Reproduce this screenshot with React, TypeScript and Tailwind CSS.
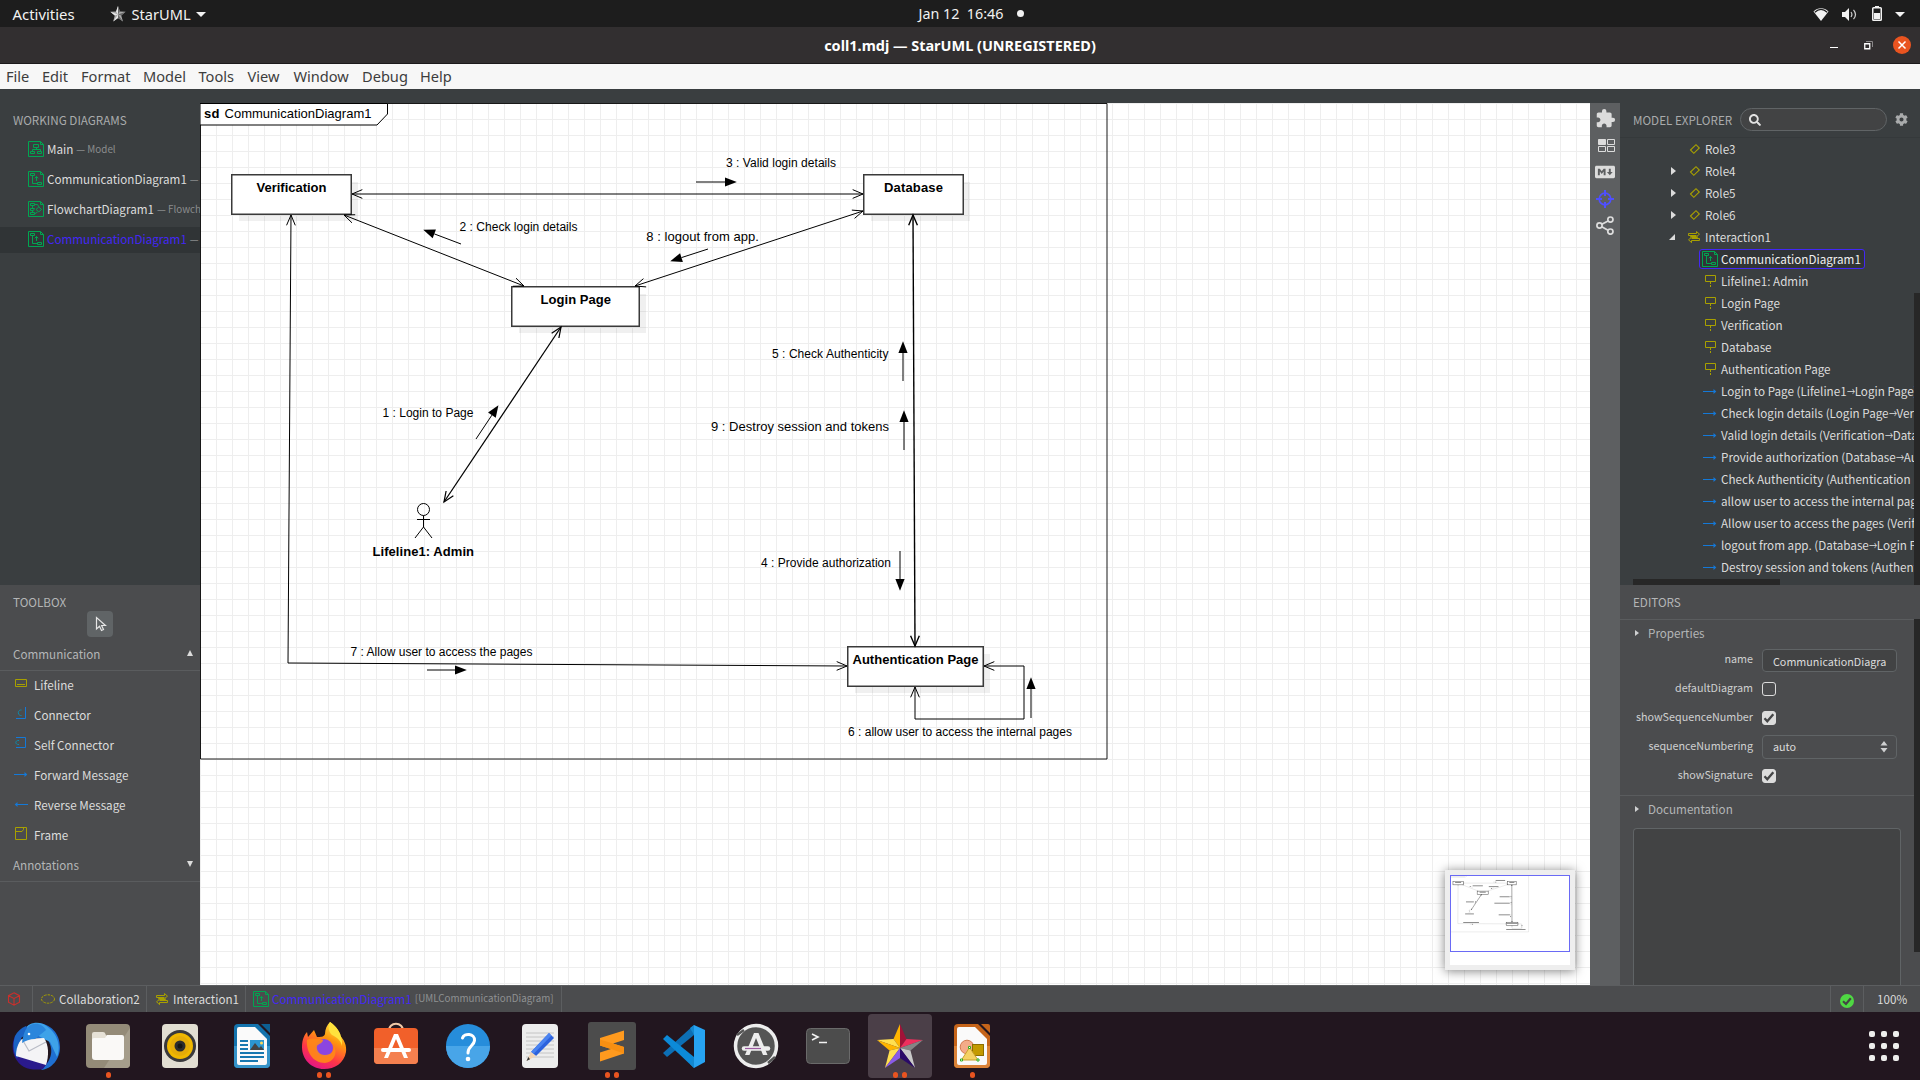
import React from "react";
import { FaSearch, FaCog, FaMarkdown } from "react-icons/fa";
import { MdExtension } from "react-icons/md";

const UI = "font-['Noto_Sans_CJK_SC','Noto_Sans',sans-serif]";
const GREEN = "#00a651";
const OLIVE = "#a8a000";
const BLUE = "#1479d8";

/* ---------- small icons ---------- */

function DiagramIcon({ kind }: { kind: "class" | "comm" | "flow" }) {
  return (
    <svg width="16" height="16" viewBox="0 0 16 16" fill="none" stroke={GREEN} strokeWidth="1" className="shrink-0">
      <path d="M.5.5H12.5L15.5 3.5V15.5H.5ZM12.5.5V3.5H15.5" />
      {kind === "class" && <path d="M5.500 3.500H10.500V6.500H5.500ZM8.500 6.500V8.500M4.500 10.500V8.500H12.500V10.500M2.500 10.500H6.500V12.500H2.500ZM9.500 10.500H13.500V12.500H9.500Z" />}
      {kind === "comm" && <path d="M2.500 2.500H6.500V4.500H2.500ZM4.500 4.500V12.500H9.500M9.500 11.500H13.500V13.500H9.500ZM8.500 10V5.500M6.800 7.300L8.500 5.500L10.200 7.300" />}
      {kind === "flow" && <path d="M2.500 2.500H6.500V4.500H2.500ZM6.500 3.500H9.500L11 6M2.500 7.500H6.500L5.500 9.500H2.500ZM8 8.500L10.800 6L13.500 8.500L10.800 10.800ZM2.500 11.500H6.500V13.500H2.500ZM6.500 13L9.500 11M4.500 5V7.500M4.500 9.700V12" />}
    </svg>
  );
}

function DiamondIcon() {
  return (
    <svg width="12" height="12" viewBox="0 0 12 12" fill="none" stroke={OLIVE} strokeWidth="1.1">
      <path d="M1.5 7L7 1.7L10.3 5L4.8 10.3Z" />
    </svg>
  );
}

function InteractionIcon() {
  return (
    <svg width="12" height="12" viewBox="0 0 12 12" fill="none" stroke={OLIVE} strokeWidth="1">
      <path d="M.5 2.500H8.500V.5L11.500 3.200L8.500 5.500H2.500V6.500M11.500 9.500H3.500V11.700L.5 8.700L3.500 6.500H9.500V5.500M.5 2.500V4.500H8.500M11.500 9.500V7.500H3.500" />
    </svg>
  );
}

function LifelineIcon() {
  return (
    <svg width="12" height="14" viewBox="0 0 12 14" fill="none" stroke={OLIVE}>
      <path d="M.5 1.500H10.500V7.500H.5Z" />
      <path d="M5.500 8V14" strokeDasharray="2 1" />
    </svg>
  );
}

function MessageIcon({ flip = false }: { flip?: boolean }) {
  return (
    <svg width="14" height="7" viewBox="0 0 14 7" className={flip ? "-scale-x-100" : ""}>
      <path d="M0 3.500H12" stroke={BLUE} />
      <path d="M10.500 1L13.300 3.500L10.500 6Z" fill={BLUE} />
    </svg>
  );
}

function CrosshairIcon() {
  return (
    <svg width="18" height="18" viewBox="0 0 18 18" fill="none" stroke="#4f4fff" strokeWidth="2">
      <circle cx="9" cy="9" r="5.8" strokeWidth="1.7" />
      <path d="M9 0V6M9 12V18M0 9H6M12 9H18" />
    </svg>
  );
}

function ShareIcon() {
  return (
    <svg width="18" height="19" viewBox="0 0 18 19" fill="none" stroke="#dcdcdc" strokeWidth="1.7">
      <circle cx="14.4" cy="3.6" r="2.6" />
      <circle cx="3.5" cy="9.5" r="2.6" />
      <circle cx="14.4" cy="15.6" r="2.6" />
      <path d="M5.8 8.3L12 4.9M5.8 10.7L12 14.2" />
    </svg>
  );
}

function LayoutIcon() {
  return (
    <svg width="17" height="13" viewBox="0 0 17 13" fill="none" stroke="#dcdcdc">
      <path d="M.5.5H7.5V5.5H.5Z" fill="#dcdcdc" />
      <path d="M9.5.5H16.5V5.5H9.5ZM.5 7.500H7.500V12.500H.5ZM9.500 7.500H16.500V12.500H9.500Z" />
    </svg>
  );
}

/* ---------- top bars ---------- */

function SystemBar() {
  return (
    <header className="grid h-[27px] shrink-0 grid-cols-3 items-center bg-[#1d1d1d] text-[14.6px] leading-[27px] text-[#f2f2f2]">
      <div className="flex items-center pl-[12.5px]">
        <span className="w-[97px] text-[14.9px]">Activities</span>
        <svg width="16" height="16" viewBox="0 0 16 16">
          <path d="M8 0L9.9 5.6L15.6 5.8L11.2 9.5L13 15.5L8 12L3.2 15.5L4.8 9.5L.3 5.8L6.1 5.6Z" fill="#aaa" />
          <path d="M8 0V8.4L6.1 5.6ZM8 8.4L.3 5.8L4.8 9.5ZM8 8.4L3.2 15.5L8 12Z" fill="#e8e8e8" />
          <path d="M8 0L9.9 5.6L8 8.4ZM8 8.4L13 15.5L8 12ZM8 8.4L15.6 5.8L11.2 9.5Z" fill="#686868" />
        </svg>
        <span className="ml-[6px] w-[64px]">StarUML</span>
        <svg width="10" height="5" viewBox="0 0 10 5"><path d="M0 0H10L5 5Z" fill="#f2f2f2" /></svg>
      </div>
      <div className="flex items-center justify-center gap-[14px] pb-px pl-[23px]">
        <span className="whitespace-pre text-[14.3px]">Jan 12  16:46</span>
        <span className="h-[7px] w-[7px] rounded-full bg-[#f2f2f2]" />
      </div>
      <div className="flex items-center justify-end pr-[15px]">
        <svg width="16" height="13" viewBox="0 0 16 13">
          <path d="M8 13L.5 3.4C4.8-.7 11.2-.7 15.500 3.400Z" fill="#f2f2f2" />
          <path d="M1.8 4.2C5.6.8 10.400.8 14.200 4.200" fill="none" stroke="#1d1d1d" strokeWidth="1.2" />
        </svg>
        <svg width="15" height="13" viewBox="0 0 15 13" className="ml-[13px]">
          <path d="M0 4H3L7 0V13L3 9H0Z" fill="#f2f2f2" />
          <path d="M9 4Q10.800 6.500 9 9M11.500 1.800Q15.500 6.500 11.500 11.200" fill="none" stroke="#cfcfcf" strokeWidth="1.200" />
        </svg>
        <svg width="10" height="15" viewBox="0 0 10 15" className="mb-px ml-[15px]">
          <path d="M3 0H7V1H3Z" fill="#f2f2f2" />
          <rect x=".75" y="1.750" width="8.500" height="12.500" rx=".8" fill="none" stroke="#f2f2f2" strokeWidth="1.500" />
          <path d="M2 7H8V13H2Z" fill="#f2f2f2" />
        </svg>
        <svg width="10" height="5" viewBox="0 0 10 5" className="ml-[13px]"><path d="M0 0H10L5 5Z" fill="#f2f2f2" /></svg>
      </div>
    </header>
  );
}

function TitleBar() {
  return (
    <div className="grid h-[37px] shrink-0 grid-cols-3 items-center border-b border-[#1c1a1b] bg-[#322f30] text-white">
      <div />
      <div className="pt-[2px] text-center text-[14.48px] leading-[34px] font-bold whitespace-nowrap">coll1.mdj — StarUML (UNREGISTERED)</div>
      <div className="flex items-center justify-end pr-[9px]">
        <span className="mt-[5px] h-px w-2 bg-white" />
        <svg width="9" height="9" viewBox="0 0 9 9" className="ml-[26px]" fill="none">
          <path d="M2 .5H8.500V6" stroke="#8a8889" />
          <path d="M.75 2.750H5.750V7.750H.75Z" stroke="#fff" strokeWidth="1.300" />
        </svg>
        <svg width="18" height="18" viewBox="0 0 18 18" className="ml-[20px]">
          <circle cx="9" cy="9" r="9" fill="#e95420" />
          <path d="M5.500 5.500L12.500 12.500M12.500 5.500L5.500 12.500" stroke="#fff" strokeWidth="1.500" />
        </svg>
      </div>
    </div>
  );
}

function MenuBar() {
  return (
    <nav className="flex h-[25px] shrink-0 bg-[#f7f7f7] pl-[6px] text-[14.6px] leading-[25px] text-[#3d3d3d]">
      <span className="w-[36px]">File</span>
      <span className="w-[39px]">Edit</span>
      <span className="w-[62px]">Format</span>
      <span className="w-[55.500px]">Model</span>
      <span className="w-[49px]">Tools</span>
      <span className="w-[46px]">View</span>
      <span className="w-[68.500px]">Window</span>
      <span className="w-[58px]">Debug</span>
      <span>Help</span>
    </nav>
  );
}

/* ---------- left column ---------- */

const working: { name: string; note: string; kind: "class" | "comm" | "flow"; active?: boolean }[] = [
  { name: "Main", note: "— Model", kind: "class" },
  { name: "CommunicationDiagram1", note: "—", kind: "comm" },
  { name: "FlowchartDiagram1", note: "— Flowchart1", kind: "flow" },
  { name: "CommunicationDiagram1", note: "—", kind: "comm", active: true },
];

function WorkingDiagrams() {
  return (
    <section className="h-[482px] overflow-hidden bg-[#3a3e40]">
      <h2 className="mt-[5px] h-[24px] pl-[13px] text-[11.7px] leading-[24px] text-[#a9abac]">WORKING DIAGRAMS</h2>
      <ul className="mt-[5px] flex flex-col gap-1">
        {working.map((d, i) => (
          <li key={i} className={`flex h-[26px] items-center overflow-hidden pb-[2px] pl-[28px] text-[11.67px] leading-[24px] whitespace-nowrap ${d.active ? "bg-[#303436]" : ""}`}>
            <DiagramIcon kind={d.kind} />
            <span className={`ml-[3px] ${d.active ? "text-[#4327f5]" : "text-[#dcdcdc]"}`}>{d.name}</span>
            <span className="ml-[3px] shrink-0 text-[9.85px] text-[#8b8d8e]">{d.note}</span>
          </li>
        ))}
      </ul>
    </section>
  );
}

const tools: { name: string; icon: React.ReactNode }[] = [
  { name: "Lifeline", icon: <svg width="14" height="14" viewBox="0 0 14 14" fill="none" stroke={OLIVE}><path d="M1.500 2.500H12.500V9.500H1.500ZM3 7.500H11" /></svg> },
  { name: "Connector", icon: <svg width="14" height="14" viewBox="0 0 14 14" fill="none" stroke={BLUE}><path d="M11.500 0V11.500H2" /><path d="M7.500 3C3.200 2.500 3.200 9 7.500 8.500" stroke="#0f8aa8" /></svg> },
  { name: "Self Connector", icon: <svg width="14" height="14" viewBox="0 0 14 14" fill="none" stroke={BLUE}><path d="M2 .5H11.500V10.500H2" /><path d="M5 3.500C.8 3 .8 8 5 7.500" stroke="#0f8aa8" /></svg> },
  { name: "Forward Message", icon: <MessageIcon /> },
  { name: "Reverse Message", icon: <MessageIcon flip /> },
  { name: "Frame", icon: <svg width="14" height="14" viewBox="0 0 14 14" fill="none" stroke={OLIVE}><path d="M1.500.5H12.500V12.500H1.500ZM1.500 4.500H8L9.500 2.500V.5" /></svg> },
];

function Toolbox() {
  return (
    <section className="h-[400px] bg-[#4b4c4e] text-[11.67px] leading-[24px]">
      <h2 className="pt-[5px] pl-[13px] text-[#b4b6b7]">TOOLBOX</h2>
      <div className="mx-auto -mt-[3px] flex h-[26px] w-[26px] items-center justify-center rounded-[4px] bg-[#606466] pl-[2px]">
        <svg width="12" height="16" viewBox="0 0 12 16" fill="none" stroke="#e6e6e6" strokeWidth="1.200">
          <path d="M1.500 1.500V13L4.500 10.300L6.500 14.500L8.500 13.500L6.600 9.500H10.500Z" />
        </svg>
      </div>
      <div className="mt-[3px] flex h-[31px] items-start justify-between border-b border-[#5a5c5e] pt-[2px] pr-[7px] pl-[13px] text-[#b4b6b7]">
        <span>Communication</span>
        <svg width="6" height="6" viewBox="0 0 6 6" className="mt-[8px]"><path d="M3 0L6 6H0Z" fill="#dcdcdc" /></svg>
      </div>
      <ul className="h-[180px] text-[#dcdcdc]">
        {tools.map((t) => (
          <li key={t.name} className="flex h-[30px] items-center pb-[3px] pl-[14px]">
            <span className="flex w-[14px] items-center pb-[1px]">{t.icon}</span>
            <span className="ml-[6px]">{t.name}</span>
          </li>
        ))}
      </ul>
      <div className="flex h-[31px] items-start justify-between border-b border-[#5a5c5e] pt-[2px] pr-[7px] pl-[13px] text-[#b4b6b7]">
        <span>Annotations</span>
        <svg width="6" height="6" viewBox="0 0 6 6" className="mt-[8px]"><path d="M3 6L6 0H0Z" fill="#dcdcdc" /></svg>
      </div>
    </section>
  );
}

/* ---------- diagram ---------- */

type Pt = [number, number];

function Open({ at, from }: { at: Pt; from: Pt }) {
  const a = Math.atan2(at[1] - from[1], at[0] - from[0]);
  const p = (s: number) => {
    const L = 11.2, d = 0.4;
    return `${at[0] - L * Math.cos(a + s * d)} ${at[1] - L * Math.sin(a + s * d)}`;
  };
  return <path d={`M${p(1)}L${at[0]} ${at[1]}L${p(-1)}`} fill="none" />;
}

function Link({ pts, w = 1 }: { pts: Pt[]; w?: number }) {
  const n = pts.length;
  return (
    <g stroke="#000" strokeWidth={w} fill="none">
      <polyline points={pts.map((p) => p.join(",")).join(" ")} />
      <Open at={pts[0]} from={pts[1]} />
      <Open at={pts[n - 1]} from={pts[n - 2]} />
    </g>
  );
}

function Solid({ from, to }: { from: Pt; to: Pt }) {
  const a = Math.atan2(to[1] - from[1], to[0] - from[0]);
  const c = Math.cos(a), s = Math.sin(a);
  const tx = to[0] + 0.8 * c, ty = to[1] + 0.8 * s;
  const bx = to[0] - 11 * c, by = to[1] - 11 * s;
  return (
    <g>
      <path d={`M${from[0]} ${from[1]}L${bx} ${by}`} stroke="#000" />
      <path d={`M${tx} ${ty}L${bx - 4.600 * s} ${by + 4.600 * c}L${bx + 4.600 * s} ${by - 4.600 * c}Z`} />
    </g>
  );
}

const boxes: [number, number, number, number][] = [
  [231, 174, 121, 41],
  [511, 286, 129, 41],
  [863, 174, 101, 41],
  [847, 646, 137, 41],
];

const labels: { t: string; x: number; y: number; w: number; s: number; b?: boolean }[] = [
  { t: "sd", x: 204, y: 118, w: 15.5, s: 13, b: true },
  { t: "CommunicationDiagram1", x: 224.5, y: 118, w: 147, s: 13 },
  { t: "Verification", x: 256.5, y: 192, w: 70, s: 13, b: true },
  { t: "Database", x: 884, y: 192, w: 59, s: 13, b: true },
  { t: "Login Page", x: 540.5, y: 304, w: 70.5, s: 13, b: true },
  { t: "Authentication Page", x: 852.5, y: 664, w: 126, s: 13, b: true },
  { t: "Lifeline1: Admin", x: 372.5, y: 556, w: 101.5, s: 13, b: true },
  { t: "1 : Login to Page", x: 382.5, y: 417, w: 91, s: 12 },
  { t: "2 : Check login details", x: 459.5, y: 231, w: 118, s: 12 },
  { t: "3 : Valid login details", x: 726, y: 167, w: 110, s: 12 },
  { t: "4 : Provide authorization", x: 761, y: 567, w: 130, s: 12 },
  { t: "5 : Check Authenticity", x: 772, y: 358, w: 116.5, s: 12 },
  { t: "6 : allow user to access the internal pages", x: 848, y: 736, w: 224, s: 12 },
  { t: "7 : Allow user to access the pages", x: 350.5, y: 656, w: 182, s: 12 },
  { t: "8 : logout from app.", x: 646.3, y: 241, w: 112.5, s: 13 },
  { t: "9 : Destroy session and tokens", x: 711, y: 431, w: 178, s: 13 },
];

function Diagram({ mini = false }: { mini?: boolean }) {
  return (
    <>
      <path d="M200.500 103.500H1107V759H200.500Z" fill="none" stroke="#000" strokeOpacity=".9" />
      <path d="M200 103.500H387.500V114L377 125H200Z" fill="#fff" stroke="#000" />
      {boxes.map(([x, y, w, h]) => (
        <g key={`${x}-${y}`}>
          <rect x={x + 8} y={y + 8} width={w - 2} height={h - 2} fill="#000" fillOpacity=".06" />
          <rect x={x + 0.75} y={y + 0.75} width={w - 1.5} height={h - 1.5} fill="#fff" stroke="#3a3a3a" strokeWidth={mini ? 5 : 1.5} />
        </g>
      ))}
      <Link pts={[[352, 194], [863, 194]]} />
      <Link pts={[[344, 215], [524, 286]]} />
      <Link pts={[[635, 286], [863, 211]]} />
      <Link pts={[[561, 327], [444, 502]]} w={mini ? 4 : 1.25} />
      <Link pts={[[913, 215], [915, 646]]} w={mini ? 4 : 1.4} />
      <Link pts={[[291, 215], [288, 663], [847, 666]]} />
      <Link pts={[[984, 666], [1024, 666], [1024, 719], [915, 719], [915, 687]]} />
      <Solid from={[476, 439]} to={[498, 406]} />
      <Solid from={[461, 244]} to={[424, 230]} />
      <Solid from={[696, 182]} to={[736, 182]} />
      <Solid from={[708, 249]} to={[671, 261]} />
      <Solid from={[903, 381]} to={[903, 342]} />
      <Solid from={[904, 450]} to={[904, 411]} />
      <Solid from={[900, 551]} to={[900, 590]} />
      <Solid from={[427, 670]} to={[466, 670]} />
      <Solid from={[1031, 718]} to={[1031, 678]} />
      <g fill="none" stroke="#000">
        <circle cx="423.5" cy="509.5" r="6" />
        <path d="M423.5 515.5V527L415 538M423.5 527L432 538M417 519.5H430" />
      </g>
      {labels.map((l) =>
        mini ? (
          <rect key={l.t} x={l.x} y={l.y - 9} width={l.w} height={8} fillOpacity={l.y < 120 ? 0.1 : 0.65} />
        ) : (
          <text key={l.t} x={l.x} y={l.y} textLength={l.w} fontSize={l.s} fontWeight={l.b ? 700 : 400}>{l.t}</text>
        )
      )}
    </>
  );
}

function Canvas() {
  return (
    <main className="relative h-[882px] w-[1390px] shrink-0 bg-white bg-[linear-gradient(to_right,#eee_1px,transparent_1px),linear-gradient(to_bottom,#eee_1px,transparent_1px)] bg-[size:16px_16px]">
      <svg width="1390" height="882" viewBox="200 103 1390 882" className="block font-['Liberation_Sans',Arial,sans-serif]">
        <Diagram />
      </svg>
      <div className="absolute right-[15px] bottom-[15px] h-[100px] w-[130px] border-[5px] border-[#eee] bg-white shadow-[0_1px_10px_rgba(0,0,0,0.5)]">
        <div className="h-[77px] w-[120px] border border-[#6a6af5]">
          <svg width="118" height="75" viewBox="209 112 1366 868" className="block">
            <Diagram mini />
          </svg>
        </div>
      </div>
    </main>
  );
}

/* ---------- right column ---------- */

function SideStrip() {
  return (
    <aside className="flex h-[882px] w-[30px] shrink-0 flex-col items-center bg-[#5d5f61] text-[#dcdcdc]">
      <span className="mt-[3px] flex h-[27px] items-center pb-[3px]"><MdExtension size={21} /></span>
      <span className="flex h-[27px] items-center pb-[2px] pl-[2px]"><LayoutIcon /></span>
      <span className="flex h-[26px] items-center pb-[2px]"><FaMarkdown size={20} /></span>
      <span className="flex h-[27px] items-center pb-[2px]"><CrosshairIcon /></span>
      <span className="flex h-[27px] items-center pb-[2px]"><ShareIcon /></span>
    </aside>
  );
}

const roles = [
  { name: "Role3", open: false },
  { name: "Role4", open: true },
  { name: "Role5", open: true },
  { name: "Role6", open: true },
];
const lifelines = ["Lifeline1: Admin", "Login Page", "Verification", "Database", "Authentication Page"];
const messages: [string, string?][] = [
  ["Login to Page (Lifeline1", "Login Page)"],
  ["Check login details (Login Page", "Verification)"],
  ["Valid login details (Verification", "Database)"],
  ["Provide authorization (Database", "Authentication Page)"],
  ["Check Authenticity (Authentication"],
  ["allow user to access the internal pages"],
  ["Allow user to access the pages (Verification"],
  ["logout from app. (Database", "Login Page)"],
  ["Destroy session and tokens (Authentication"],
];

function ModelExplorer() {
  return (
    <section className="flex h-[482px] flex-col bg-[#3a3e40] text-[11.67px]">
      <div className="flex h-[35px] items-center border-b border-[#35393b] pb-px pl-[13px]">
        <h2 className="w-[107px] leading-[24px] whitespace-nowrap text-[#a9abac]">MODEL EXPLORER</h2>
        <div className="flex h-[23px] w-[147px] items-center rounded-full border border-[#606466] bg-[#424344] pl-[8px] text-[#e2e2e2]">
          <FaSearch size={12} />
        </div>
        <FaCog size={13} className="ml-[8px] text-[#a9abac]" />
      </div>
      <div className="flex min-h-0 flex-1">
        <div className="flex w-[294px] flex-col overflow-hidden text-[#dcdcdc]">
          <ul className="h-[441px] leading-[22px] whitespace-nowrap">
            {roles.map((r) => (
              <li key={r.name} className="flex h-[22px] items-center pl-[51px]">
                <span className="w-[18px]">{r.open && <svg width="5" height="8" viewBox="0 0 5 8"><path d="M0 0L5 4L0 8Z" fill="#dcdcdc" /></svg>}</span>
                <span className="w-[16px]"><DiamondIcon /></span>
                {r.name}
              </li>
            ))}
            <li className="flex h-[22px] items-center pl-[49px]">
              <span className="w-[19px]"><svg width="6" height="6" viewBox="0 0 6 6"><path d="M6 0V6H0Z" fill="#dcdcdc" /></svg></span>
              <span className="w-[17px]"><InteractionIcon /></span>
              Interaction1
            </li>
            <li className="flex h-[22px] items-center pl-[79px]">
              <span className="flex h-[20px] w-[166px] items-center gap-[3px] rounded-[3px] border border-[#4327f5] bg-[#303436] pl-[2px] leading-[18px] text-[#f0f0f0]">
                <DiagramIcon kind="comm" />
                CommunicationDiagram1
              </span>
            </li>
            {lifelines.map((l) => (
              <li key={l} className="flex h-[22px] items-center pl-[85px]">
                <span className="w-[16px]"><LifelineIcon /></span>
                {l}
              </li>
            ))}
            {messages.map(([a, b]) => (
              <li key={a} className="flex h-[22px] items-center pl-[83px]">
                <span className="w-[18px] shrink-0"><MessageIcon /></span>
                <span>{a}</span>
                {b && (
                  <>
                    <span className="w-[8px] shrink-0 origin-left scale-x-[0.7]">→</span>
                    <span>{b}</span>
                  </>
                )}
              </li>
            ))}
          </ul>
          <div className="ml-[13px] h-[6px] w-[147px] bg-[#272727]" />
        </div>
        <div className="mt-[155px] h-[292px] w-[6px] bg-[#272727]" />
      </div>
    </section>
  );
}

function Check({ on }: { on: boolean }) {
  return (
    <svg width="14" height="14" viewBox="0 0 14 14">
      <rect x=".5" y=".5" width="13" height="13" rx="2.5" fill={on ? "#dcdcdc" : "none"} stroke="#dcdcdc" />
      {on && <path d="M2.5 7.2L5.3 10.3L11.3 3.2" fill="none" stroke="#444546" strokeWidth="2.3" />}
    </svg>
  );
}

function Row({ label, children }: { label: string; children: React.ReactNode }) {
  return (
    <div className="flex h-[29px] items-center text-[10.77px]">
      <span className="w-[133px] pb-[3px] text-right leading-[24px] text-[#cfd0d1]">{label}</span>
      <span className="ml-[9px] flex pb-px">{children}</span>
    </div>
  );
}

function Caret() {
  return <svg width="4" height="6" viewBox="0 0 4 6" className="mr-[9px]"><path d="M0 0L4 3L0 6Z" fill="#cfd0d1" /></svg>;
}

function Editors() {
  return (
    <section className="flex h-[400px] flex-col bg-[#4b4c4e] text-[11.67px] text-[#b4b6b7]">
      <h2 className="h-[34px] shrink-0 pl-[13px] leading-[34px]">EDITORS</h2>
      <div className="flex h-[366px]">
        <div className="w-[294px] border-t border-[#5a5c5e]">
          <div className="flex h-[26px] items-center pl-[15px] leading-[24px]"><Caret />Properties</div>
          <div className="h-[149px]">
            <Row label="name">
              <span className="flex h-[23px] w-[135px] rounded-[4px] border border-[#606466] bg-[#424344] px-[10px] text-[#dcdcdc]">
                <span className="w-[114px] overflow-hidden leading-[23px] whitespace-nowrap">CommunicationDiagram1</span>
              </span>
            </Row>
            <Row label="defaultDiagram"><Check on={false} /></Row>
            <Row label="showSequenceNumber"><Check on /></Row>
            <Row label="sequenceNumbering">
              <span className="flex h-[24px] w-[135px] items-center justify-between rounded-[4px] border border-[#606466] pr-[8px] pl-[10px] leading-[22px] text-[#dcdcdc]">
                auto
                <svg width="8" height="12" viewBox="0 0 8 12" className="mb-px"><path d="M4 0L7.5 4.5H.5ZM4 11.5L7.5 7H.5Z" fill="#cfd0d1" /></svg>
              </span>
            </Row>
            <Row label="showSignature"><Check on /></Row>
          </div>
          <div className="flex h-[32px] items-center border-t border-[#5a5c5e] pb-[5px] pl-[15px] leading-[24px]"><Caret />Documentation</div>
          <div className="mt-px ml-[13px] h-[157px] w-[268px] rounded-t-[4px] border border-b-0 border-[#606466] bg-[#424344]" />
        </div>
        <div className="h-[333px] w-[6px] bg-[#272727]" />
      </div>
    </section>
  );
}

/* ---------- status bar ---------- */

function StatusBar() {
  return (
    <footer className={`flex h-[27px] shrink-0 items-stretch border-t border-[#5c5e60] bg-[#4b4c4e] text-[11.67px] leading-[25px] text-[#dcdcdc] ${UI}`}>
      <div className="flex w-[33px] items-center justify-center border-r border-[#5c5e60] pr-[4px]">
        <svg width="14" height="14" viewBox="0 0 14 14" fill="none" stroke="#c9302c" strokeWidth="1.1">
          <path d="M7 .8L12.5 3.7V10.2L7 13.2L1.5 10.2V3.7ZM1.5 3.7L7 6.5L12.5 3.7M7 6.5V13.2" />
        </svg>
      </div>
      <div className="flex w-[114px] items-center border-r border-[#5c5e60] pb-px pl-[8px]">
        <svg width="14" height="10" viewBox="0 0 14 10" fill="none" stroke={OLIVE}><ellipse cx="7" cy="5" rx="6.5" ry="4.2" strokeDasharray="2.5 1" /></svg>
        <span className="ml-[4px]">Collaboration2</span>
      </div>
      <div className="flex w-[99px] items-center border-r border-[#5c5e60] pb-px pl-[9px]">
        <InteractionIcon />
        <span className="ml-[5px]">Interaction1</span>
      </div>
      <div className="flex w-[316px] items-center border-r border-[#5c5e60] pb-px pl-[7px]">
        <DiagramIcon kind="comm" />
        <span className="ml-[3px] text-[#4327f5]">CommunicationDiagram1</span>
        <span className="ml-[3px] text-[9.81px] text-[#8f9192]">[UMLCommunicationDiagram]</span>
      </div>
      <div className="ml-auto flex w-[34px] items-center justify-center border-x border-[#5c5e60] pt-[3px]">
        <svg width="14" height="14" viewBox="0 0 14 14">
          <circle cx="7" cy="7" r="7" fill="#4fd843" />
          <path d="M3 7.2L6 10L10.8 4.3" fill="none" stroke="#444" strokeWidth="2.2" />
        </svg>
      </div>
      <div className="w-[56px] pl-[13px]">100%</div>
    </footer>
  );
}

/* ---------- dock ---------- */

const dockIcons: { id: string; dots: number; active?: boolean; art: React.ReactNode }[] = [
  {
    id: "mail", dots: 0,
    art: (
      <>
        <path d="M24 1C39 1 48 12 48 25C48 37 40 47 29 48C38 40 43 30 36 18L10 14C13 6 16 2 24 1Z" fill="#1f6fd0" />
        <path d="M13 7C18-1 30-1 37 6C46 13 49 25 45 35L38 20Z" fill="#3ea2e8" />
        <path d="M3 14C-2 25 1 39 12 45C18 48 25 48 31 47L36 40L6 30Z" fill="#2a1a8c" />
        <path d="M3 14C0 24 2 32 5 36L12 26L9 16L18 10L14 4C9 6 5 10 3 14Z" fill="#1a63c4" />
        <path d="M10 17L32 16C37 23 37 34 34 43L4 34C4 27 6 21 10 17Z" fill="#f4f4f6" />
        <path d="M10 17L17 29L34 20" fill="none" stroke="#b9bcc6" strokeWidth="1.2" />
        <path d="M16 5C22-1 31 2 34 8L23 17C18 17 13 19 10 21C11 16 12 8 16 5Z" fill="#2b86dc" />
        <circle cx="17" cy="12" r="1.3" fill="#fff" />
      </>
    ),
  },
  {
    id: "files", dots: 1,
    art: (
      <>
        <rect x="2" y="2" width="44" height="44" rx="4" fill="#948b78" />
        <path d="M46 6V42Q46 46 42 46H20Z" fill="#a59d8b" />
        <path d="M8 12Q8 10 10 10H19Q21 10 21.5 12L22 13.5H38V22H8Z" fill="#e6e1d6" />
        <path d="M8 18Q8 16 10 16H21L23 13H38Q40 13 40 15V35Q40 38 37 38H11Q8 38 8 35Z" fill="#faf9f7" />
      </>
    ),
  },
  {
    id: "music", dots: 0,
    art: (
      <>
        <rect x="6" y="2" width="36" height="44" rx="4" fill="#e2ded2" />
        <circle cx="24" cy="24" r="16" fill="#3a3a3c" />
        <circle cx="24" cy="24" r="13" fill="#f0b800" />
        <circle cx="24" cy="24" r="10" fill="#e5ac08" />
        <circle cx="24" cy="24" r="5.5" fill="#2c2c2e" />
        <circle cx="24" cy="24" r="2.5" fill="#151515" />
      </>
    ),
  },
  {
    id: "writer", dots: 0,
    art: (
      <>
        <path d="M10 2H30L42 14V42Q42 46 38 46H10Q6 46 6 42V6Q6 2 10 2Z" fill="#1373ad" />
        <path d="M6 24H42V42Q42 46 38 46H10Q6 46 6 42Z" fill="#3493c9" />
        <path d="M33 2H42V11Z" fill="#0d5f92" />
        <path d="M11 5H27L39 17V41Q39 43 37 43H11Q9 43 9 41V7Q9 5 11 5Z" fill="#fafafa" />
        <path d="M12 19H20M12 23H20M12 27H20M12 31H36M12 35H36M12 39H30" stroke="#1878b0" strokeWidth="2" />
        <rect x="22" y="18" width="14" height="10" fill="#2c96d0" />
        <path d="M22 28L27 21L31 26L33 24L36 28Z" fill="#444" />
        <circle cx="33.5" cy="21" r="1.5" fill="#ffd75a" />
      </>
    ),
  },
  {
    id: "firefox", dots: 2,
    art: (
      <>
        <defs>
          <linearGradient id="fx" x1=".8" y1="0" x2=".3" y2="1">
            <stop offset="0" stopColor="#fff44f" /><stop offset=".35" stopColor="#ff980e" /><stop offset=".7" stopColor="#ff3647" /><stop offset="1" stopColor="#e31587" />
          </linearGradient>
        </defs>
        <path d="M30 0C37 5 40 10 40 14C44 17 47 24 46 30C44 41 35 47 24 47C11 47 2 37 2 25C2 17 5 12 7 10L8 15L14 8L17 15C21 15 24 15 25 12C25 7 27 3 30 0Z" fill="url(#fx)" />
        <circle cx="24" cy="26" r="9" fill="#8b45e0" />
        <path d="M7 18C12 15 18 17 23 18C23 21 18 22 17 24C16 28 19 33 25 33C31 33 34 29 34 24C38 31 34 40 25 41C13 41 6 30 7 18Z" fill="#ff8a16" fillOpacity=".9" />
        <path d="M30 0C37 5 43 12 42 24C41 18 36 15 32 13C28 9 28 4 30 0Z" fill="#ffe23d" />
      </>
    ),
  },
  {
    id: "software", dots: 0,
    art: (
      <>
        <path d="M17 10C16-1 32-1 31 10" fill="none" stroke="#f0c9a8" strokeWidth="2" />
        <rect x="2" y="6" width="44" height="36" rx="4" fill="#f1602a" />
        <path d="M2 26H46V38Q46 42 42 42H6Q2 42 2 38Z" fill="#f4804f" />
        <path d="M22 12H26L36 36H32L24 17L16 36H12Z" fill="#fff" />
        <path d="M11 28H37" stroke="#fff" strokeWidth="4" strokeLinecap="round" />
      </>
    ),
  },
  {
    id: "help", dots: 0,
    art: (
      <>
        <circle cx="24" cy="24" r="22" fill="#268ddb" />
        <path d="M2 24A22 22 0 0 0 46 24Z" fill="#48a5e8" />
        <path d="M18.5 16C20 11 31 11 30.5 18.5C30 24 24 24 24 31" fill="none" stroke="#fff" strokeWidth="3" strokeLinecap="round" />
        <circle cx="24" cy="37" r="2.3" fill="#fff" />
      </>
    ),
  },
  {
    id: "notes", dots: 0,
    art: (
      <>
        <rect x="6" y="2" width="36" height="44" rx="4" fill="#ededed" />
        <path d="M10 11H38M10 15H38M10 19H38M10 23H38M10 27H38M10 31H38M10 35H38" stroke="#c4c4c4" strokeWidth="1" />
        <path d="M33 11L38 16L20 34L15 30Z" fill="#2c62dd" />
        <path d="M33 11L35.5 13.5L17.5 32L15 30Z" fill="#4a83f0" />
        <path d="M15 30L20 34L10.5 39Z" fill="#f3d5b5" />
        <path d="M12.3 35L14 37.2L10.5 39Z" fill="#333" />
      </>
    ),
  },
  {
    id: "sublime", dots: 2,
    art: (
      <>
        <rect x="0" y="0" width="48" height="48" rx="3" fill="#4c4c4c" />
        <path d="M12 16L36 8.500V18L25 21.500L36 25V31.500L12 39.500V30.500L23 27L12 23.500Z" fill="#ff9a1e" />
        <path d="M12 23.500L23 27L36 31.500V25L25 21.500L12 17.500Z" fill="#f78f12" />
      </>
    ),
  },
  {
    id: "code", dots: 0,
    art: (
      <>
        <path d="M3 31L7 35L34 13V3L3 31Z" fill="#0d6fb5" />
        <path d="M3 17L7 13L34 35V46L3 17Z" fill="#0c8ad8" />
        <path d="M34 3L45 8V40L34 46Z" fill="#27a3f2" />
        <path d="M34 3L30 6L34 13V35L30 42L34 46Z" fill="#1488d0" />
      </>
    ),
  },
  {
    id: "updater", dots: 0,
    art: (
      <>
        <circle cx="24" cy="24" r="20.5" fill="#555" stroke="#ededed" strokeWidth="3.5" />
        <path d="M5 13L12 8M36 41L43 35" stroke="#555" strokeWidth="2.5" />
        <path d="M22 11H26.5L35.5 33H31L24 16L17.5 33H13Z" fill="#ededed" />
        <path d="M12 26.5H36" stroke="#ededed" strokeWidth="4.5" strokeLinecap="round" />
        <path d="M13 26.5H29" stroke="#9b5aa0" strokeWidth="1.2" />
      </>
    ),
  },
  {
    id: "terminal", dots: 0,
    art: (
      <>
        <rect x="2.5" y="6.5" width="43" height="35" rx="4" fill="#4c4c4c" stroke="#6a6a6a" />
        <path d="M8 12L14 15L8 18M15 20.5H23" fill="none" stroke="#f2f2f2" strokeWidth="1.6" />
      </>
    ),
  },
  {
    id: "staruml", dots: 2, active: true,
    art: (
      <>
        <path d="M24 2L17.5 17L24 26Z" fill="#ffb400" />
        <path d="M24 2L30.5 17L24 26Z" fill="#a01238" />
        <path d="M17.5 17L1 18L24 26Z" fill="#ffdf50" />
        <path d="M1 18L13.5 28.5L24 26Z" fill="#ffb400" />
        <path d="M30.5 17L47 18L24 26Z" fill="#ee2f5d" />
        <path d="M47 18L34.5 28.5L24 26Z" fill="#858585" />
        <path d="M34.5 28.5L39 46L24 26Z" fill="#c9c9c9" />
        <path d="M13.5 28.5L9 46L24 26Z" fill="#ffdf50" />
        <path d="M9 46L24 36V26Z" fill="#8a5be6" />
        <path d="M39 46L24 36V26Z" fill="#2a0a68" />
      </>
    ),
  },
  {
    id: "draw", dots: 1,
    art: (
      <>
        <path d="M10 2H30L42 14V42Q42 46 38 46H10Q6 46 6 42V6Q6 2 10 2Z" fill="#c5641a" />
        <path d="M6 24H42V42Q42 46 38 46H10Q6 46 6 42Z" fill="#db8338" />
        <path d="M33 2H40Q42 2 42 4V11Z" fill="#c5641a" />
        <path d="M11 5H27L39 17V41Q39 43 37 43H11Q9 43 9 41V7Q9 5 11 5Z" fill="#fafafa" />
        <circle cx="19" cy="25" r="6.8" fill="#f4ab88" stroke="#d27b50" />
        <rect x="24.5" y="22.5" width="11" height="11" fill="#c39a00" stroke="#8c6e00" />
        <path d="M21.5 25.5L30 38H13.5Z" fill="#f5d264" stroke="#c9a02c" />
        <path d="M20.5 24.5H22.5V26.5H20.5ZM12.5 37H14.5V39H12.5ZM29 37H31V39H29Z" fill="#fff" stroke="#30b020" />
      </>
    ),
  },
];

function Dock() {
  return (
    <div className="flex h-[68px] shrink-0 items-start bg-[#22161f] pl-1">
      {dockIcons.map((d) => (
        <div key={d.id} className={`mt-[2px] mr-2 flex h-[64px] w-[64px] flex-col items-center pt-2 ${d.active ? "rounded-[4px] bg-[#4b3f48]" : ""}`}>
          <svg width="48" height="48" viewBox="0 0 48 48">{d.art}</svg>
          <div className="mt-[2px] flex gap-[4px]">
            {Array.from({ length: d.dots }, (_, i) => (
              <span key={i} className="h-[6px] w-[5px] rounded-full bg-[#e95420]" />
            ))}
          </div>
        </div>
      ))}
      <div className="mt-[19px] mr-[21px] ml-auto grid grid-cols-3 gap-[6px]">
        {Array.from({ length: 9 }, (_, i) => (
          <span key={i} className="h-[6px] w-[6px] rounded-[2px] bg-[#eeeeec]" />
        ))}
      </div>
    </div>
  );
}

export default function App() {
  return (
    <div className="flex h-[1080px] w-[1920px] flex-col overflow-hidden bg-[#3a3e40] font-['Noto_Sans',sans-serif]">
      <SystemBar />
      <TitleBar />
      <MenuBar />
      <div className="h-[14px] shrink-0 bg-[#3a3e40]" />
      <div className="flex h-[882px] shrink-0">
        <div className={`w-[200px] shrink-0 ${UI}`}>
          <WorkingDiagrams />
          <Toolbox />
        </div>
        <Canvas />
        <SideStrip />
        <div className={`w-[300px] shrink-0 ${UI}`}>
          <ModelExplorer />
          <Editors />
        </div>
      </div>
      <StatusBar />
      <Dock />
    </div>
  );
}
